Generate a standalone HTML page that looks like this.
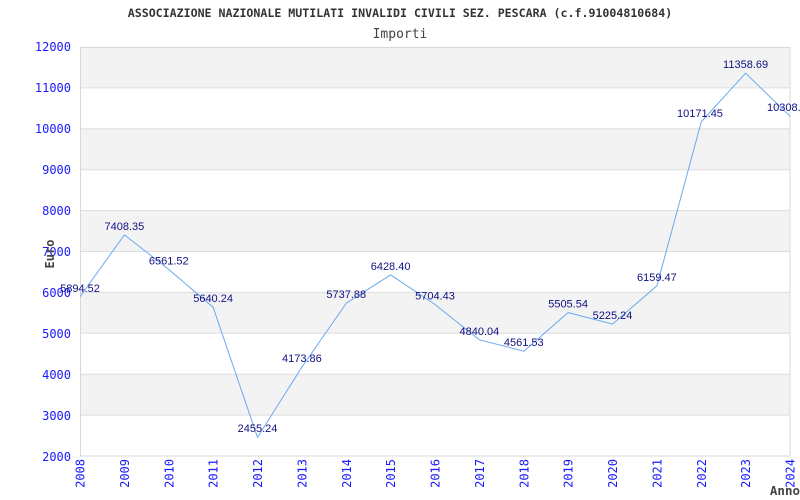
<!DOCTYPE html>
<html><head><meta charset="utf-8"><style>
html,body{margin:0;padding:0;background:#fff;}
svg{display:block;}
</style></head><body>
<svg width="800" height="500" xmlns="http://www.w3.org/2000/svg">
<rect width="800" height="500" fill="#fff"/>
<text x="400" y="17" text-anchor="middle" font-family="DejaVu Sans Mono, Liberation Mono, monospace" font-weight="bold" font-size="11.6" fill="#333">ASSOCIAZIONE NAZIONALE MUTILATI INVALIDI CIVILI SEZ. PESCARA (c.f.91004810684)</text>
<text x="400" y="38" text-anchor="middle" font-family="DejaVu Sans Mono, Liberation Mono, monospace" font-size="13" fill="#444">Importi</text>
<g fill="#f3f3f3">
<rect x="80" y="47" width="710" height="40.9"/>
<rect x="80" y="128.8" width="710" height="40.9"/>
<rect x="80" y="210.6" width="710" height="40.9"/>
<rect x="80" y="292.4" width="710" height="40.9"/>
<rect x="80" y="374.2" width="710" height="40.9"/>
</g>
<g stroke="#ddd" stroke-width="1">
<line x1="80" x2="790" y1="87.9" y2="87.9"/><line x1="80" x2="790" y1="128.8" y2="128.8"/>
<line x1="80" x2="790" y1="169.7" y2="169.7"/><line x1="80" x2="790" y1="210.6" y2="210.6"/>
<line x1="80" x2="790" y1="251.5" y2="251.5"/><line x1="80" x2="790" y1="292.4" y2="292.4"/>
<line x1="80" x2="790" y1="333.3" y2="333.3"/><line x1="80" x2="790" y1="374.2" y2="374.2"/>
<line x1="80" x2="790" y1="415.1" y2="415.1"/>
</g>
<rect x="80.5" y="47.5" width="709.5" height="408.5" fill="none" stroke="#d8d8d8"/>
<g font-family="DejaVu Sans Mono, Liberation Mono, monospace" font-size="12" fill="#1a1aff" text-anchor="end">
<text x="71" y="51">12000</text><text x="71" y="92">11000</text><text x="71" y="133">10000</text>
<text x="71" y="174">9000</text><text x="71" y="215">8000</text><text x="71" y="256">7000</text>
<text x="71" y="297">6000</text><text x="71" y="338">5000</text><text x="71" y="379">4000</text>
<text x="71" y="420">3000</text><text x="71" y="461">2000</text>
</g>
<g font-family="DejaVu Sans Mono, Liberation Mono, monospace" font-size="12" fill="#1a1aff" text-anchor="end">
<text transform="translate(84.5,459) rotate(-90)">2008</text>
<text transform="translate(128.9,459) rotate(-90)">2009</text>
<text transform="translate(173.3,459) rotate(-90)">2010</text>
<text transform="translate(217.6,459) rotate(-90)">2011</text>
<text transform="translate(262,459) rotate(-90)">2012</text>
<text transform="translate(306.4,459) rotate(-90)">2013</text>
<text transform="translate(350.8,459) rotate(-90)">2014</text>
<text transform="translate(395.1,459) rotate(-90)">2015</text>
<text transform="translate(439.5,459) rotate(-90)">2016</text>
<text transform="translate(483.9,459) rotate(-90)">2017</text>
<text transform="translate(528.3,459) rotate(-90)">2018</text>
<text transform="translate(572.6,459) rotate(-90)">2019</text>
<text transform="translate(617,459) rotate(-90)">2020</text>
<text transform="translate(661.4,459) rotate(-90)">2021</text>
<text transform="translate(705.8,459) rotate(-90)">2022</text>
<text transform="translate(750.1,459) rotate(-90)">2023</text>
<text transform="translate(794.5,459) rotate(-90)">2024</text>
</g>
<text x="800" y="495" text-anchor="end" font-family="DejaVu Sans Mono, Liberation Mono, monospace" font-weight="bold" font-size="12.5" fill="#444">Anno</text>
<text transform="translate(54,254) rotate(-90)" text-anchor="middle" font-family="DejaVu Sans Mono, Liberation Mono, monospace" font-weight="bold" font-size="12" fill="#444">Euro</text>
<polyline fill="none" stroke="#6aaaf0" stroke-width="1" points="80,296.7 124.4,234.8 168.8,269.5 213.1,307.2 257.5,437.4 301.9,367.1 346.3,303.2 390.6,274.9 435,304.5 479.4,339.8 523.8,351.2 568.1,312.6 612.5,324.1 656.9,285.8 701.3,121.8 745.6,73.2 790,116.2"/>
<g font-family="Liberation Sans, Arial, sans-serif" font-size="11" fill="#101080" text-anchor="middle">
<text x="80" y="292">5894.52</text>
<text x="124.4" y="230">7408.35</text>
<text x="168.8" y="264.5">6561.52</text>
<text x="213.1" y="302">5640.24</text>
<text x="257.5" y="432">2455.24</text>
<text x="301.9" y="362">4173.86</text>
<text x="346.3" y="298">5737.88</text>
<text x="390.6" y="270">6428.40</text>
<text x="435" y="299.5">5704.43</text>
<text x="479.4" y="335">4840.04</text>
<text x="523.8" y="346">4561.53</text>
<text x="568.1" y="307.5">5505.54</text>
<text x="612.5" y="319">5225.24</text>
<text x="656.9" y="281">6159.47</text>
<text x="700" y="117">10171.45</text>
<text x="745.6" y="68">11358.69</text>
<text x="790" y="111">10308.30</text>
</g>
</svg>
</body></html>
